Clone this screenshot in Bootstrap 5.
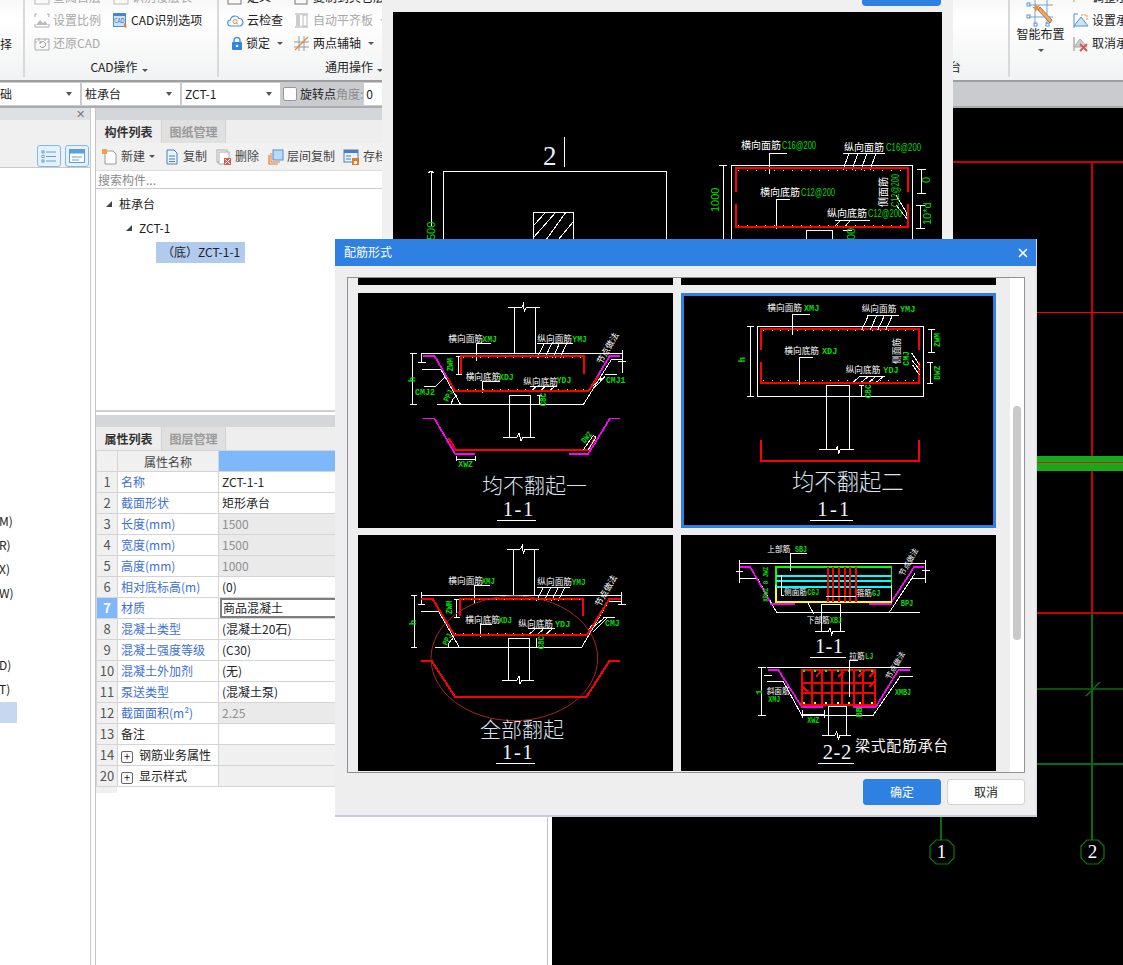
<!DOCTYPE html>
<html lang="zh">
<head>
<meta charset="utf-8">
<title>配筋形式</title>
<link href="https://cdn.jsdelivr.net/npm/bootstrap@5.3.0/dist/css/bootstrap.min.css" rel="stylesheet">
<style>
html,body{margin:0;background:#fff}
body{font:12px/1.2 "Noto Sans CJK SC","Liberation Sans",sans-serif;color:#222}
.app{width:1123px;height:965px;overflow:hidden;position:relative}
.rib{height:80px;background:linear-gradient(#f8f8f8,#fff 25%,#f1f2f3 100%);overflow:hidden}
.rgrp{position:relative;height:77px;border-right:2px solid #d9d9d9;flex:none}
.g1{width:25px}.g2{width:194px}.g3{width:420px}.g4{width:371px}.g5{width:113px;border-right:0}
.g1sp{height:33px}
.rrows{display:grid;grid-auto-rows:23px;margin-top:-14px;padding-left:8px}
.rr2{grid-template-columns:79px 110px;padding-left:9px}
.rr3{grid-template-columns:67px 120px}
.ritem{display:flex;align-items:center;gap:3px;white-space:nowrap;height:23px}
.ritem svg{flex:none}
.ind{padding-left:4px}
.dis{color:#a8a8a8}
.tri{display:inline-block;width:0;height:0;border-left:3px solid transparent;border-right:3px solid transparent;border-top:3px solid #555;margin-left:4px}
.tril{border-top-color:#bbb}
.rlab{position:absolute;left:0;right:0;top:59px;text-align:center;height:16px;line-height:16px}
.rlab2{padding-right:4px}
.rlab3{left:106px;text-align:left}
.rlab4{text-align:right;padding-right:47px}
.smart{margin-top:-14px}
.smartc{width:61px;flex:none}
.smartc svg{margin-top:11px}
.smartc .tri{margin:8px 0 0}
.smartr{margin-left:2px;flex:none}
.smartr .ritem{margin-bottom:0}
.tbar{height:28px;background:#c9cbce;border-top:2px solid #9f9f9f;border-bottom:2px solid #a9abae;flex:none;padding-top:1px}
.cmb{height:22px;background:#fff;display:flex;align-items:center;padding:0 8px 0 3px;justify-content:space-between;flex:none;overflow:hidden}
.cmb .tri{border-top-width:4px}
.c1{width:80px;margin-right:2px;padding-left:0}
.c1 span:first-child{margin-left:-12px}
.c2{width:98px;margin-right:2px}
.c3{width:98px;margin-right:3px}
.c4{width:60px;padding-left:2px;margin-left:1px}
.chk.form-check-input{width:14px;height:14px;margin:4px 3px 0 0;border:1px solid #999;border-radius:2px;flex:none}
.tl{line-height:22px}
.tld{line-height:22px;color:#8d8d8d}
.ws{height:857px;flex:none}
.lpan{width:91px;border-right:1px solid #c9c9c9;flex:none;position:relative}
.lstrip{height:12px;background:#dfe0e3;display:flex;justify-content:flex-end;align-items:center;padding-right:5px;color:#777;font-size:11px}
.ltool{height:48px;background:#f0f0f0;border-bottom:1px solid #c8c8c8;display:flex;justify-content:flex-end;gap:4px;padding:25px 1px 0 0}
.vbtn{width:24px;height:22px;border:1px solid #7fb8ee;border-radius:3px;background:#e6f1fc;display:flex;align-items:center;justify-content:center}
.lrows{padding-top:341px}
.lrow{height:24px;line-height:24px;width:17px;overflow:hidden;white-space:nowrap;text-indent:-1px}
.lrow.sel{background:#c6d8f0;height:21px;margin-top:1px}
.gut{width:4px;flex:none}
.mpan{width:453px;border-left:1px solid #c4c4c4;border-right:1px solid #c4c4c4;flex:none;display:flex;flex-direction:column}
.pstrip{height:12px;background:#d4d6da;flex:none}
.ptabs{height:23px;background:#eeeeee;display:flex;flex:none}
.ptab{width:65px;height:23px;line-height:24px;text-align:center;font-weight:700;color:#333}
.ptab.off{background:#e0e0e0;border:1px solid #d2d2d2;border-width:0 1px;color:#9a9a9a}
.ptool{height:27px;background:#f1f1f1;display:flex;align-items:center;flex:none;padding-left:6px;white-space:nowrap}
.ptool span.t{color:#444}
.t1{margin:0 4px 0 3px}.t2{margin:0 9px 0 5px}.t3{margin:0 9px 0 3px}.t4{margin:0 8px 0 3px}.t5{margin:0 0 0 4px}
.ptool .tri{margin:0 10px 0 0}
.psearch{height:19px;border-top:1px solid #ddd;border-bottom:1px solid #ccc;color:#8a8a8a;padding-left:2px;line-height:18px;flex:none}
.ptree{height:221px;flex:none;padding-top:3px;position:relative}
.tnode{height:24px;line-height:24px;display:flex;align-items:center}
.tn1{padding-left:10px}.tn2{padding-left:30px}
.tnode i{display:block;width:0;height:0;border-left:6px solid transparent;border-bottom:6px solid #444;margin-right:7px}
.tsel{margin-left:60px;height:21px;width:89px;background:#b0cbee;display:flex;align-items:center;padding-left:6px;white-space:nowrap;margin-top:2px}
.sepl{height:5px;border-top:2px solid #cfcfcf;flex:none}
.ptbl{table-layout:fixed;width:451px;border-collapse:collapse;margin:0;--bs-table-bg:transparent}
.ptbl td,.ptbl th{border:1px solid #d4d4d4!important;padding:0 3px;height:21px;line-height:19px;font-weight:400;font-size:12px;white-space:nowrap;overflow:hidden;box-shadow:none}
.cn{width:21px}.cm{width:101px}
.ptbl .n{background:#f0f0f0;text-align:center;color:#555;padding:0;font-size:13px}
.ptbl .nm{color:#3d6fd6}
.ptbl .bk{color:#222}
.ptbl .hv{background:#7eb8fa}
.ptbl .gv{background:#eaeaea;color:#8f8f8f}
.ptbl .gr{background:#f0f0f0}
.ptbl .hn{background:#f0f0f0;text-align:center;color:#444}
.ptbl .act{background:#7eb8fa;color:#fff;font-weight:700}
.ptbl td.ed{padding:0 0 0 2px}
.edb{border:2px solid #7d7d7d;border-right:0;height:20px;line-height:16px;padding-left:1px;margin-left:-1px}
.pm{display:inline-block;width:12px;height:12px;border:1px solid #666;border-radius:2px;line-height:9px;text-align:center;font-size:11px;margin-right:6px;vertical-align:-1px;background:#fafafa}
.stub{height:6px;width:21px;background:#f0f0f0;flex:none}
.gutr{width:4px;flex:none}
.cnv{flex:1 1 auto;background:#000;display:block}
.win{position:absolute;background:#f0f0f0}
.back{left:382px;top:0;width:571px;height:241px;display:flex;flex-direction:column;align-items:flex-start}
.bbtn{width:79px;height:6px;background:#2f80e3;border-radius:0 0 4px 4px;margin:0 0 6px 480px;flex:none}
.bimg{display:block;margin-left:11px;background:#000;flex:none}
.front{left:335px;top:239px;width:702px;height:578px;background:#eeeeee;border-bottom:2px solid #c7cbdb;border-right:1px solid #d6d9e4;display:flex;flex-direction:column}
.ftitle{height:27px;flex:none;background:#2f80e3;color:#fff;display:flex;align-items:center;justify-content:space-between;padding:0 7px 0 9px}
.xbtn{background:none;border:0;color:#fff;padding:1px;width:12px;height:12px;display:flex}
.frame{margin:11px 0 0 12px;width:678px;height:496px;border:1px solid #8e909a;flex:none;display:flex;overflow:hidden}
.cells{display:grid;grid-template-columns:315px 315px;grid-template-rows:7px 235px 236px;column-gap:8px;row-gap:7.5px;padding-left:10px;width:662px;flex:none;align-content:start}
.cellb{background:#000}
.cells svg{display:block;background:#000}
.sel3{outline:3px solid #2f80e3;outline-offset:-3px}
.sbar{width:15px;background:#fff;flex:none;padding:128px 3px 0}
.sthumb{height:234px;background:#c9c9c9;border-radius:4px;width:8px}
.ffoot{display:flex;justify-content:flex-end;gap:6px;padding:6px 11px 0 0}
.ffoot .btn{width:78px;height:26px;padding:0;font-size:12px;line-height:24px;border-radius:3px}
.okb.btn{background:#2f80e3;border:1px solid #2f80e3;color:#fff}
.nob.btn{background:#fff;border:1px solid #d3d3d3;color:#222}
svg text{font-family:"Noto Sans CJK SC",sans-serif}
.cad{shape-rendering:crispEdges}
.w{fill:none;stroke:#fff;stroke-width:3}
.r{fill:none;stroke:#f00;stroke-width:6}
.m{fill:none;stroke:#f0f;stroke-width:5}
.y{fill:none;stroke:#ff0;stroke-width:3;stroke-dasharray:3 22}
.gl{fill:none;stroke:#0f0;stroke-width:5}
.yl{fill:none;stroke:#ff0;stroke-width:5}
.cy{fill:none;stroke:#0ff;stroke-width:5}
.yd{fill:none;stroke:#ff0;stroke-width:6;stroke-dasharray:6 28}
.gd{fill:none;stroke:#0f0;stroke-width:6;stroke-dasharray:6 28}
.lb{font-size:26px;fill:#fff}
.lbs{font-size:23px;fill:#fff}
.gn{font-size:26px;fill:#0d0;font-family:"Liberation Mono",monospace!important;font-weight:700}
.gs{font-size:22px}
.ti{font-size:63px;fill:#dbe2ee;font-weight:300}
.ti2{font-size:67px}
.no{font-size:62px;fill:#eef3fa;font-family:"Liberation Serif",serif!important}
.lt{font-size:45px;fill:#f4f4f4}
.b{font-size:10px;fill:#fff}
.bg{font-size:11px;fill:#0d0;font-family:"Liberation Sans",sans-serif!important}
.two{font-size:27px;fill:#eaf0fa;font-family:"Liberation Serif",serif!important}
.axn{font-size:19px;fill:#fff;font-family:"Liberation Serif",serif!important}
.ty{font-size:5.500px;fill:#2f6db5}
</style>
</head>
<body>
<div class="app">
  <!-- ribbon -->
  <div class="rib d-flex">
    <div class="rgrp g1"><div class="g1sp"></div><div class="ritem">择</div></div>
    <div class="rgrp g2">
      <div class="rrows rr2">
        <div class="ritem dis"><svg width="16" height="14" viewBox="0 0 16 14"><rect x="1" y="2" width="14" height="11" fill="none" stroke="#bbb"/></svg>查阅首层</div>
        <div class="ritem dis"><svg width="16" height="14" viewBox="0 0 16 14"><rect x="1" y="2" width="14" height="11" fill="none" stroke="#bbb"/></svg>识别楼层表</div>
        <div class="ritem dis"><svg width="16" height="15" viewBox="0 0 16 15"><path d="M1 4V1h2M13 1h2v3M1 11v3h14v-3" fill="none" stroke="#aaa"/><path d="M2 12l4-5 3 3 2-2 3 4z" fill="#bbb"/></svg>设置比例</div>
        <div class="ritem"><svg width="15" height="15" viewBox="0 0 15 15"><rect x=".5" y=".5" width="12" height="13" fill="#cfe2f7" stroke="#4a90d9"/><rect x=".5" y=".5" width="12" height="2.5" fill="#3f86d6"/><text class="ty" x="1" y="10">CAD</text><path d="M11 10l3 2-1 1 1 2-3-1z" fill="#ee7a3a"/></svg>CAD识别选项</div>
        <div class="ritem dis"><svg width="16" height="15" viewBox="0 0 16 15"><path d="M1 3h14v11H1z" fill="none" stroke="#aaa"/><path d="M5 2v3M11 2v3M1 6h2M13 6h2" stroke="#aaa"/><path d="M6 10a3 3 0 1 0 1-4M6 5l1 2H5" fill="none" stroke="#999"/></svg>还原CAD</div>
        <div></div>
      </div>
      <div class="rlab rlab2">CAD操作<span class="tri"></span></div>
    </div>
    <div class="rgrp g3">
      <div class="rrows rr3">
        <div class="ritem"><svg width="17" height="14" viewBox="0 0 17 14"><rect x="1" y="1" width="13" height="12" fill="none" stroke="#777"/></svg>定义</div>
        <div class="ritem"><svg width="16" height="14" viewBox="0 0 16 14"><rect x="1" y="1" width="12" height="12" fill="none" stroke="#777"/></svg>复制到其它层</div>
        <div class="ritem"><svg width="17" height="12" viewBox="0 0 17 12"><path d="M4 11a3 3 0 0 1-.5-6A4.500 4.500 0 0 1 12 3.500 3.800 3.800 0 0 1 13 11z" fill="#fff" stroke="#3f96e0" stroke-width="1.200"/><circle cx="8" cy="6.500" r="2" fill="none" stroke="#e8873a"/><path d="M9.500 8l1.500 1.500" stroke="#e8873a"/></svg>云检查</div>
        <div class="ritem dis"><svg width="16" height="15" viewBox="0 0 16 15"><path d="M1 1h13M1 14h13" stroke="#aaa"/><rect x="2" y="2" width="4" height="11" fill="#ccc"/><rect x="9" y="2" width="4" height="11" fill="none" stroke="#bbb"/></svg>自动平齐板<span class="tri tril"></span></div>
        <div class="ritem ind"><svg width="12" height="15" viewBox="0 0 12 15"><path d="M3 7V4.500a3 3 0 0 1 6 0V7" fill="none" stroke="#4f97e2" stroke-width="1.500"/><rect x="1" y="6" width="10" height="8" rx="1" fill="#2f86e0"/><circle cx="6" cy="10" r="1.300" fill="#fff"/></svg>锁定<span class="tri"></span></div>
        <div class="ritem"><svg width="16" height="15" viewBox="0 0 16 15"><path d="M0 6h15M0 11h15M5 0v15M10 0v15" stroke="#999"/><path d="M1 14L14 1" stroke="#e8873a" stroke-width="1.300"/></svg>两点辅轴<span class="tri"></span></div>
      </div>
      <div class="rlab rlab3">通用操作<span class="tri"></span></div>
    </div>
    <div class="rgrp g4"><div class="rlab rlab4">桩承台</div></div>
    <div class="rgrp g5">
      <div class="d-flex smart">
        <div class="d-flex flex-column align-items-center smartc">
          <svg width="30" height="30" viewBox="0 0 30 30"><path d="M3 8h24M3 20h24M9 2v25M21 2v25" stroke="#6da5df" fill="none"/><rect x="1" y="6" width="3" height="3" fill="none" stroke="#5b95d3"/><rect x="1" y="18" width="3" height="3" fill="none" stroke="#5b95d3"/><rect x="8" y="26" width="3" height="3" fill="none" stroke="#5b95d3"/><rect x="20" y="26" width="3" height="3" fill="none" stroke="#5b95d3"/><path d="M14 10l12 13 -2 3L12 13z" fill="#e8a76c" stroke="#b47436"/><path d="M9 6l2 3 3-1-2 3 2 3-3-1-2 2 0-3-3-2 3 0z" fill="#ef8a3c"/></svg>
          <span class="text-nowrap">智能布置</span>
          <span class="tri"></span>
        </div>
        <div class="smartr d-flex flex-column">
          <div class="ritem"><svg width="16" height="14" viewBox="0 0 16 14"><path d="M2 8h11" stroke="#e88a2c" stroke-width="1.500"/><path d="M1 5v6" stroke="#e88a2c"/></svg>调整承台</div>
          <div class="ritem"><svg width="16" height="16" viewBox="0 0 16 16"><path d="M1 1v14M1 1h4" stroke="#4a90d9" fill="none"/><path d="M1 13l7-9 7 9z" fill="#cfe4f8" stroke="#4a90d9"/><path d="M8 2h6v6" stroke="#e88a2c" stroke-dasharray="2 1" fill="none"/></svg>设置承台</div>
          <div class="ritem"><svg width="16" height="16" viewBox="0 0 16 16"><path d="M1 1v14" stroke="#888"/><path d="M1 11l6-8 7 8z" fill="#ccc" stroke="#aaa"/><path d="M7 8l7 7M14 8l-7 7" stroke="#e2574c" stroke-width="2"/></svg>取消承台</div>
        </div>
      </div>
    </div>
  </div>
  <!-- property toolbar -->
  <div class="tbar d-flex align-items-start">
    <div class="cmb c1"><span>基础</span><span class="tri"></span></div>
    <div class="cmb c2"><span>桩承台</span><span class="tri"></span></div>
    <div class="cmb c3"><span>ZCT-1</span><span class="tri"></span></div>
    <input class="form-check-input chk" type="checkbox" aria-label="旋转点">
    <span class="tl">旋转点</span><span class="tld">角度:</span>
    <div class="cmb c4">0</div>
  </div>
  <!-- workspace -->
  <div class="ws d-flex">
    <div class="lpan">
      <div class="lstrip">✕</div>
      <div class="ltool">
        <div class="vbtn"><svg width="16" height="13" viewBox="0 0 16 13"><path d="M5 2h10M5 6.500h10M5 11h10" stroke="#5aa0e0"/><rect x="1" y="1" width="2" height="2" fill="none" stroke="#5aa0e0"/><rect x="1" y="5.500" width="2" height="2" fill="none" stroke="#5aa0e0"/><rect x="1" y="10" width="2" height="2" fill="none" stroke="#5aa0e0"/></svg></div>
        <div class="vbtn"><svg width="16" height="14" viewBox="0 0 16 14"><rect x=".5" y=".5" width="15" height="13" fill="#fff" stroke="#5aa0e0"/><rect x="1" y="1" width="14" height="3.500" fill="#5aa0e0"/><path d="M3 8h10M3 11h7" stroke="#5aa0e0"/></svg></div>
      </div>
      <div class="lrows">
        <div class="lrow">M)</div><div class="lrow">R)</div><div class="lrow">X)</div><div class="lrow">W)</div>
        <div class="lrow"></div><div class="lrow"></div>
        <div class="lrow">D)</div><div class="lrow">T)</div>
        <div class="lrow sel"></div>
      </div>
    </div>
    <div class="gut"></div>
    <div class="mpan">
      <div class="pstrip"></div>
      <div class="ptabs"><div class="ptab">构件列表</div><div class="ptab off">图纸管理</div></div>
      <div class="ptool">
        <svg width="16" height="16" viewBox="0 0 16 16"><path d="M3 2h8l3 3v10H3z" fill="#fff" stroke="#999"/><path d="M0 0h5v5H0z" fill="#f6a24a"/></svg><span class="t t1">新建</span><span class="tri"></span>
        <svg width="13" height="16" viewBox="0 0 13 16"><path d="M2 1h7l3 3v11H2z" fill="#eaf3fc" stroke="#4a7fb8"/><path d="M4 7h6M4 10h6M4 12.500h6" stroke="#4a7fb8"/></svg><span class="t t2">复制</span>
        <svg width="16" height="16" viewBox="0 0 16 16"><rect x="1" y="1" width="10" height="12" fill="#fff" stroke="#aaa"/><rect x="3" y="3" width="10" height="12" fill="#fff" stroke="#aaa"/><rect x="8" y="9" width="7" height="7" fill="#e05a55"/><path d="M9 10l5 5M14 10l-5 5" stroke="#fff"/></svg><span class="t t3">删除</span>
        <svg width="16" height="16" viewBox="0 0 16 16"><path d="M1 6v9h9" fill="none" stroke="#e87a2a" stroke-width="1.200"/><path d="M3 4v9h9" fill="none" stroke="#e87a2a"/><rect x="5" y="1" width="10" height="10" fill="#bcd9f7" stroke="#4a90d9"/></svg><span class="t t4">层间复制</span>
        <svg width="16" height="16" viewBox="0 0 16 16"><rect x="1" y="1" width="14" height="12" fill="#eaf3fc" stroke="#4a7fb8"/><rect x="1" y="1" width="14" height="3" fill="#4a7fb8"/><path d="M3 7h5M3 10h5" stroke="#4a7fb8"/><rect x="9" y="9" width="7" height="7" fill="#e87a2a"/><rect x="11" y="12" width="3" height="3" fill="#fff"/></svg><span class="t t5">存档</span>
      </div>
      <div class="psearch">搜索构件...</div>
      <div class="ptree">
        <div class="tnode tn1"><i></i>桩承台</div>
        <div class="tnode tn2"><i></i>ZCT-1</div>
        <div class="tsel">（底）ZCT-1-1</div>
      </div>
      <div class="sepl"></div>
      <div class="pstrip"></div>
      <div class="ptabs"><div class="ptab">属性列表</div><div class="ptab off">图层管理</div></div>
      <table class="table ptbl">
        <colgroup><col class="cn"><col class="cm"><col></colgroup>
        <thead><tr><th class="hn"></th><th class="hn">属性名称</th><th class="hv"></th></tr></thead>
        <tbody>
          <tr><td class="n">1</td><td class="nm">名称</td><td>ZCT-1-1</td></tr>
          <tr><td class="n">2</td><td class="nm">截面形状</td><td>矩形承台</td></tr>
          <tr><td class="n">3</td><td class="nm">长度(mm)</td><td class="gv">1500</td></tr>
          <tr><td class="n">4</td><td class="nm">宽度(mm)</td><td class="gv">1500</td></tr>
          <tr><td class="n">5</td><td class="nm">高度(mm)</td><td class="gv">1000</td></tr>
          <tr><td class="n">6</td><td class="nm">相对底标高(m)</td><td>(0)</td></tr>
          <tr><td class="n act">7</td><td class="nm">材质</td><td class="ed"><div class="edb">商品混凝土</div></td></tr>
          <tr><td class="n">8</td><td class="nm">混凝土类型</td><td>(混凝土20石)</td></tr>
          <tr><td class="n">9</td><td class="nm">混凝土强度等级</td><td>(C30)</td></tr>
          <tr><td class="n">10</td><td class="nm">混凝土外加剂</td><td>(无)</td></tr>
          <tr><td class="n">11</td><td class="nm">泵送类型</td><td>(混凝土泵)</td></tr>
          <tr><td class="n">12</td><td class="nm">截面面积(m²)</td><td class="gv">2.25</td></tr>
          <tr><td class="n">13</td><td class="bk">备注</td><td></td></tr>
          <tr><td class="n">14</td><td class="bk"><span class="pm">+</span>钢筋业务属性</td><td class="gr"></td></tr>
          <tr><td class="n">20</td><td class="bk"><span class="pm">+</span>显示样式</td><td class="gr"></td></tr>
        </tbody>
      </table>
      <div class="stub"></div>
    </div>
    <div class="gutr"></div>
    <svg class="cnv" width="571" height="857" viewBox="552 108 571 857" role="img" aria-label="CAD 轴网">
      <g class="cad">
        <path d="M552 162H1123" stroke="#c80000" stroke-width="2"/>
        <path d="M1092 162V613" stroke="#c80000" stroke-width="2"/>
        <path d="M552 312H1123" stroke="#f00" stroke-width="1"/>
        <rect x="552" y="455.500" width="571" height="15" fill="#1aa81a"/>
        <path d="M552 462.500H1123" stroke="#d42020" stroke-width="1"/>
        <path d="M552 613H1123" stroke="#c80000" stroke-width="2"/>
        <path d="M1092 613V840M941 700V840" stroke="#0b6b0b" stroke-width="2"/>
        <path d="M552 689H1123" stroke="#0a500a" stroke-width="2"/>
        <path d="M552 764H1123" stroke="#0b6b0b" stroke-width="1.500"/>
      </g>
      <path d="M1086 696L1100 682" stroke="#0b7b0b" stroke-width="1.200"/>
      <path d="M936 840h12l6 6v12l-6 6h-12l-6-6v-12zM1087 840h11l6 6v12l-6 6h-11l-6-6v-12z" fill="none" stroke="#0b7b0b" stroke-width="1.200"/>
      <text class="axn" x="941.500" y="858" text-anchor="middle">1</text>
      <text class="axn" x="1092.500" y="858" text-anchor="middle">2</text>
    </svg>
  </div>

  <!-- window behind -->
  <div class="win back">
    <div class="bbtn"></div>
    <svg class="bimg" width="549" height="229" viewBox="393 12 549 229" role="img" aria-label="配筋详图">
      <g class="cad" fill="none" stroke="#fff">
        <path d="M564.500 137V167M443.500 241V171.500H666.500V241M533.500 241V212.500H573.500V241M431.500 171V226M428 173l3-2 3 2"/>
        <path d="M534 225l11-12M534 237l22-25M546 240l20-28M558 240l15-18"/>
        <path d="M731.500 241V165.500H912.500V241M723 165.500V241M719 165.500H727"/>
        <path d="M787 153H769V174M843 153H885M843 170l6-17M852 170l6-17M861 170l6-17M870 170l6-17"/>
        <path d="M790 199H776V229M835 226l6-6M845 226l6-6M835 220H870"/>
        <path d="M921 169V193M917 169H926M917 193H926M920 205V228M916 205H925M916 228H925M896 195l10 17 2 8M896 205l12 15"/>
        <path d="M806.500 241V230.500H832.500V241M843 230H852"/>
      </g>
      <g class="cad" fill="none">
        <path d="M735.500 192V168H908V192M735.500 204V227H908V204" stroke="#f00" stroke-width="2"/>
        <path d="M738 170H905M738 225H905" stroke="#ff0" stroke-dasharray="1 8"/>
      </g>
      <text class="two" x="543" y="165">2</text>
      <text class="b" x="741" y="149">横向面筋</text><text class="bg" x="782" y="149" textLength="34" lengthAdjust="spacingAndGlyphs">C16@200</text>
      <text class="b" x="844" y="151">纵向面筋</text><text class="bg" x="886" y="151" textLength="35" lengthAdjust="spacingAndGlyphs">C16@200</text>
      <text class="b" x="760" y="196">横向底筋</text><text class="bg" x="801" y="196" textLength="34" lengthAdjust="spacingAndGlyphs">C12@200</text>
      <text class="b" x="827" y="217">纵向底筋</text><text class="bg" x="868" y="217" textLength="34" lengthAdjust="spacingAndGlyphs">C12@200</text>
      <text class="b" transform="rotate(-90 887 207)" x="887" y="207">侧面筋</text>
      <text class="bg" transform="rotate(-90 899 207)" x="899" y="207" textLength="33" lengthAdjust="spacingAndGlyphs">C12@200</text>
      <text class="bg" transform="rotate(-90 719 212)" x="719" y="212">1000</text>
      <text class="bg" transform="rotate(-90 435 240)" x="435" y="240">500</text>
      <text class="bg" transform="rotate(-90 930 183)" x="930" y="183">0</text>
      <text class="bg" transform="rotate(-90 931 225)" x="931" y="225">10*d</text>
      <text class="bg" transform="rotate(-90 855 240)" x="855" y="240">00</text>
    </svg>
  </div>

  <!-- front dialog -->
  <div class="win front" role="dialog" aria-label="配筋形式">
    <div class="ftitle"><span>配筋形式</span>
      <button class="xbtn" type="button" aria-label="关闭"><svg width="10" height="10" viewBox="0 0 10 10"><path d="M1 1l8 8M9 1L1 9" stroke="#fff" stroke-width="1.600"/></svg></button>
    </div>
    <div class="frame">
      <div class="cells">
        <div class="cellb"></div><div class="cellb"></div>

        <!-- cell 1 -->
        <svg width="315" height="235" viewBox="54 170 945 705" role="img" aria-label="均不翻起一">
          <g class="cad">
            <path class="w" d="M523 214V350M586 214V350M504 214H545L550 203L553 224L558 214H600"/>
            <path class="w" d="M245 350H848M245 350V380M848 340V410M235 377H258M835 375H858"/>
            <path class="w" d="M245 398H302L362 505M292 505H730L815 368H846M830 415H796"/>
            <path class="w" d="M218 350V505M210 350H232M210 505H232"/>
            <path class="w" d="M335 505A30 30 0 0 1 350 478M252 450H287L318 420M745 465L762 440M750 455L785 425M760 458L795 420"/>
            <path class="w" d="M453 322H409V375M592 322H700M592 365L612 322M615 365L635 322M638 365L658 322M660 365L680 322"/>
            <path class="w" d="M480 436H427V470M570 450H650M570 465L590 450M597 465L617 450M625 465L645 450"/>
            <path class="w" d="M508 605V478H572V605M490 604H530L537 590L543 615L548 604H585M598 478V505M590 478H605"/>
            <path class="w" d="M355 360V415M348 360H364M348 415H366"/>
            <path class="m" d="M248 358H283L345 465H405M840 358H810L745 465H688"/>
            <path class="r" d="M362 412V360H732V412"/>
            <path class="r" d="M322 424L345 465H745L775 420"/>
            <path class="y" d="M370 362H725M355 460H740"/>
            <path class="m" d="M250 546H283L345 652H405M840 546H810L745 652H688"/>
            <path class="r" d="M325 604L347 641H745L765 604"/>
            <path class="w" d="M730 640L760 597L768 603L745 640M350 658V675M405 658V675M350 668H405"/>
            <path class="w" d="M472 852H588"/>
          </g>
          <text class="lb" x="325" y="316">横向面筋</text><text class="gn" x="427" y="316" textLength="44" lengthAdjust="spacingAndGlyphs">XMJ</text>
          <text class="lb" x="592" y="318">纵向面筋</text><text class="gn" x="697" y="318" textLength="44" lengthAdjust="spacingAndGlyphs">YMJ</text>
          <text class="lb" x="377" y="432">横向底筋</text><text class="gn" x="477" y="430" textLength="44" lengthAdjust="spacingAndGlyphs">XDJ</text>
          <text class="lb" x="550" y="447">纵向底筋</text><text class="gn" x="650" y="440" textLength="44" lengthAdjust="spacingAndGlyphs">YDJ</text>
          <text class="gn" x="798" y="440" textLength="58" lengthAdjust="spacingAndGlyphs">CMJ1</text><text class="gn" x="225" y="476" textLength="60" lengthAdjust="spacingAndGlyphs">CMJ2</text>
          <text class="gn" x="355" y="692" textLength="44" lengthAdjust="spacingAndGlyphs">XWZ</text>
          <text class="gn" transform="rotate(-90 338 405)" x="338" y="405" textLength="40" lengthAdjust="spacingAndGlyphs">ZWM</text>
          <text class="gn" transform="rotate(-90 224 437)" x="224" y="437">h</text>
          <text class="gn" transform="rotate(-65 325 498)" x="325" y="498" textLength="36" lengthAdjust="spacingAndGlyphs">PPJ</text>
          <text class="gn" transform="rotate(-50 735 622)" x="735" y="622" textLength="36" lengthAdjust="spacingAndGlyphs">DWZ</text>
          <text class="gn" transform="rotate(-90 617 510)" x="617" y="510" textLength="40" lengthAdjust="spacingAndGlyphs">C8C</text>
          <text class="lb" transform="rotate(-60 785 385)" x="785" y="385">节点做法</text>
          <text class="ti" x="426" y="770">均不翻起一</text>
          <text class="no" x="488" y="838" textLength="92">1-1</text>
        </svg>

        <!-- cell 2 -->
        <svg class="sel3" width="315" height="235" viewBox="3 170 945 705" role="img" aria-label="均不翻起二">
          <g class="cad">
            <path class="w" d="M232 271H731V481H232Z"/>
            <path class="r" d="M242 340V278H718V340M242 376V440H718V376"/>
            <path class="y" d="M250 282H715M250 433H715"/>
            <path class="w" d="M210 271V481M200 271H222M200 481H222"/>
            <path class="w" d="M755 280V347M745 280H765M745 347H765M750 378V442M740 378H760M740 442H760"/>
            <path class="w" d="M390 235H338V295M560 238H657M545 282L565 238M570 282L590 238M593 282L613 238M617 282L637 238"/>
            <path class="w" d="M399 364H358V445M540 420H615M520 437L540 420M545 437L565 420M568 437L588 420M590 437L610 420"/>
            <path class="w" d="M695 350L718 385M695 370L718 400M697 385L718 415"/>
            <path class="w" d="M439 640V448H509V640M417 640H468L472 628L476 652L480 640H521M545 448V482M537 448H553"/>
            <path class="r" d="M242 610V675H718V610"/>
            <path class="w" d="M390 853H519"/>
          </g>
          <text class="lb" x="262" y="225">横向面筋</text><text class="gn" x="372" y="225" textLength="46" lengthAdjust="spacingAndGlyphs">XMJ</text>
          <text class="lb" x="545" y="228">纵向面筋</text><text class="gn" x="660" y="228" textLength="46" lengthAdjust="spacingAndGlyphs">YMJ</text>
          <text class="lb" x="313" y="353">横向底筋</text><text class="gn" x="426" y="353" textLength="46" lengthAdjust="spacingAndGlyphs">XDJ</text>
          <text class="lb" x="497" y="411">纵向底筋</text><text class="gn" x="610" y="411" textLength="46" lengthAdjust="spacingAndGlyphs">YDJ</text>
          <text class="lb" transform="rotate(-90 661 383)" x="661" y="383">侧面筋</text>
          <text class="gn" transform="rotate(-90 688 388)" x="688" y="388" textLength="44" lengthAdjust="spacingAndGlyphs">CMJ</text>
          <text class="gn" transform="rotate(-90 195 378)" x="195" y="378">h</text>
          <text class="gn" transform="rotate(-90 780 332)" x="780" y="332" textLength="42" lengthAdjust="spacingAndGlyphs">ZWM</text>
          <text class="gn" transform="rotate(-90 780 430)" x="780" y="430" textLength="42" lengthAdjust="spacingAndGlyphs">DWZ</text>
          <text class="gn" transform="rotate(-90 572 486)" x="572" y="486" textLength="42" lengthAdjust="spacingAndGlyphs">C8C</text>
          <text class="ti ti2" x="336" y="760">均不翻起二</text>
          <text class="no" x="412" y="838" textLength="96">1-1</text>
        </svg>

        <!-- cell 3 -->
        <svg width="315" height="236" viewBox="54 15 945 708" role="img" aria-label="全部翻起">
          <g class="cad">
            <path class="w" d="M521 58V197M584 58V197M502 58H540L547 47L550 70L555 58H596"/>
            <path class="w" d="M243 197H845M243 185V225M845 185V225M233 222H255M835 222H858"/>
            <path class="w" d="M243 245H296L358 352M285 352H725L805 215H845M825 262H790"/>
            <path class="w" d="M222 197V352M212 197H232M212 352H232"/>
            <path class="w" d="M325 352A30 30 0 0 1 340 325M745 300L765 275M750 300L795 262M760 305L800 265"/>
            <path class="w" d="M450 165H403V222M590 172H690M590 212L610 172M612 212L632 172M635 212L655 172M655 212L675 172"/>
            <path class="w" d="M455 284H421V320M565 295H645M565 315L585 298M590 315L610 298M615 315L635 298"/>
            <path class="w" d="M505 451V325H568V451M487 451H530L537 438L540 462L545 451H582M590 325V352"/>
            <path class="w" d="M350 207V263M342 207H360M342 263H360"/>
            <path class="r" d="M244 207H278L342 314H742L808 207H842"/>
            <path class="r" d="M360 258V207H730V258"/>
            <path class="y" d="M368 209H725M345 310H740"/>
            <path class="r" d="M243 393H275L345 500H740L808 393H840"/>
            <path class="w" d="M468 700H585"/>
          </g>
          <ellipse cx="523" cy="385" rx="250" ry="187" fill="none" stroke="#a62626" stroke-width="3"/>
          <text class="lb" x="325" y="162">横向面筋</text><text class="gn" x="425" y="162" textLength="40" lengthAdjust="spacingAndGlyphs">XMJ</text>
          <text class="lb" x="592" y="165">纵向面筋</text><text class="gn" x="695" y="165" textLength="42" lengthAdjust="spacingAndGlyphs">YMJ</text>
          <text class="lb" x="376" y="279">横向底筋</text><text class="gn" x="476" y="279" textLength="40" lengthAdjust="spacingAndGlyphs">XDJ</text>
          <text class="lb" x="535" y="291">纵向底筋</text><text class="gn" x="645" y="291" textLength="46" lengthAdjust="spacingAndGlyphs">YDJ</text>
          <text class="gn" x="795" y="288" textLength="44" lengthAdjust="spacingAndGlyphs">CMJ</text>
          <text class="gn" transform="rotate(-90 336 252)" x="336" y="252" textLength="40" lengthAdjust="spacingAndGlyphs">ZWM</text>
          <text class="gn" transform="rotate(-90 228 285)" x="228" y="285">h</text>
          <text class="gn" transform="rotate(-65 322 348)" x="322" y="348" textLength="36" lengthAdjust="spacingAndGlyphs">PPJ</text>
          <text class="gn" transform="rotate(-90 613 358)" x="613" y="358" textLength="40" lengthAdjust="spacingAndGlyphs">C8C</text>
          <text class="lb" transform="rotate(-60 780 232)" x="780" y="232">节点做法</text>
          <text class="ti" x="420" y="620">全部翻起</text>
          <text class="no" x="486" y="686" textLength="92">1-1</text>
        </svg>

        <!-- cell 4 -->
        <svg width="315" height="236" viewBox="3 15 945 708" role="img" aria-label="梁式配筋承台">
          <g class="cad">
            <path class="w" d="M178 100H737M178 90V160M737 90V160M168 125H190M727 122H750"/>
            <path class="w" d="M178 145H232L290 247H720M628 247L705 130M697 145H737"/>
            <path class="m" d="M180 110H210L270 215M733 110H703L635 215M270 222H345M568 222H635"/>
            <path class="gl" d="M288 215V110H634V215"/>
            <path class="yl" d="M288 165V215H634V165"/>
            <path class="cy" d="M288 137H634M288 153H634M288 170H634"/>
            <path class="r" d="M443 110V215M459 110V215M477 110V215M494 110V215M510 110V215M528 110V215"/>
            <path class="w" d="M330 122V70H382M305 135V195H312M437 200H528M382 215L402 253M424 222V305M482 222V305M424 222H482M405 305H445L450 295L455 315L458 305H495"/>
            <path class="w" d="M390 382H498"/>
            <path class="w" d="M262 412H692M245 412V557M235 412H257M235 557H257M252 435H275M262 455H310L365 555H580L660 440H700"/>
            <path class="m" d="M263 420H295L365 530H430M690 420H655L588 530H520"/>
            <path class="r" d="M365 420H585V525H365ZM365 458H585M365 490H585M397 420V525M425 420V525M455 420V525M487 420V525M522 420V525M550 420V525"/>
            <path class="r" d="M408 440L425 422M475 440L490 425M535 440L552 422M567 440L583 425M368 470L385 485M568 470L583 455"/>
            <path class="yd" d="M368 520H585"/>
            <path class="gd" d="M368 422H585"/>
            <path class="w" d="M535 392H508V500M445 615V530M500 615V530M445 530H500M427 615H465L470 605L475 628L480 615H513M367 552H432M367 540V565M432 540V565M415 700H522"/>
          </g>
          <text class="lbs" x="262" y="66">上部筋</text><text class="gn" x="345" y="66" textLength="36" lengthAdjust="spacingAndGlyphs">SBJ</text>
          <text class="lbs" x="312" y="194">侧面筋</text><text class="gn" x="382" y="194" textLength="36" lengthAdjust="spacingAndGlyphs">CGJ</text>
          <text class="lbs" x="530" y="198">箍筋</text><text class="gn" x="576" y="198" textLength="25" lengthAdjust="spacingAndGlyphs">GJ</text>
          <text class="lbs" x="380" y="279">下部筋</text><text class="gn" x="450" y="279" textLength="36" lengthAdjust="spacingAndGlyphs">XBJ</text>
          <text class="gn" x="662" y="228" textLength="38" lengthAdjust="spacingAndGlyphs">BPJ</text>
          <text class="gn gs" transform="rotate(-90 265 215)" x="265" y="215" textLength="105" lengthAdjust="spacingAndGlyphs">XPWZ 8 JWZ</text>
          <text class="lbs" transform="rotate(-60 670 140)" x="670" y="140">节点做法</text>
          <text class="no" x="405" y="370" textLength="84">1-1</text>
          <text class="lbs" x="508" y="388">拉筋</text><text class="gn" x="555" y="388" textLength="25" lengthAdjust="spacingAndGlyphs">LJ</text>
          <text class="gn" transform="rotate(-90 246 494)" x="246" y="494">1</text>
          <text class="lbs" x="260" y="492">斜面筋</text><text class="gn" x="265" y="516" textLength="36" lengthAdjust="spacingAndGlyphs">XMJ</text>
          <text class="gn" x="645" y="496" textLength="48" lengthAdjust="spacingAndGlyphs">XMBJ</text><text class="gn" x="382" y="580" textLength="36" lengthAdjust="spacingAndGlyphs">XWZ</text>
          <text class="gn" transform="rotate(-90 546 562)" x="546" y="562" textLength="30" lengthAdjust="spacingAndGlyphs">BB</text>
          <text class="lbs" transform="rotate(-60 630 450)" x="630" y="450">节点做法</text>
          <text class="no" x="428" y="688" textLength="86">2-2</text>
          <text class="lt" x="525" y="662" textLength="280">梁式配筋承台</text>
        </svg>
      </div>
      <div class="sbar"><div class="sthumb"></div></div>
    </div>
    <div class="ffoot">
      <button type="button" class="btn okb">确定</button>
      <button type="button" class="btn nob">取消</button>
    </div>
  </div>
</div>
<script src="https://cdn.jsdelivr.net/npm/bootstrap@5.3.0/dist/js/bootstrap.bundle.min.js"></script>
</body>
</html>
